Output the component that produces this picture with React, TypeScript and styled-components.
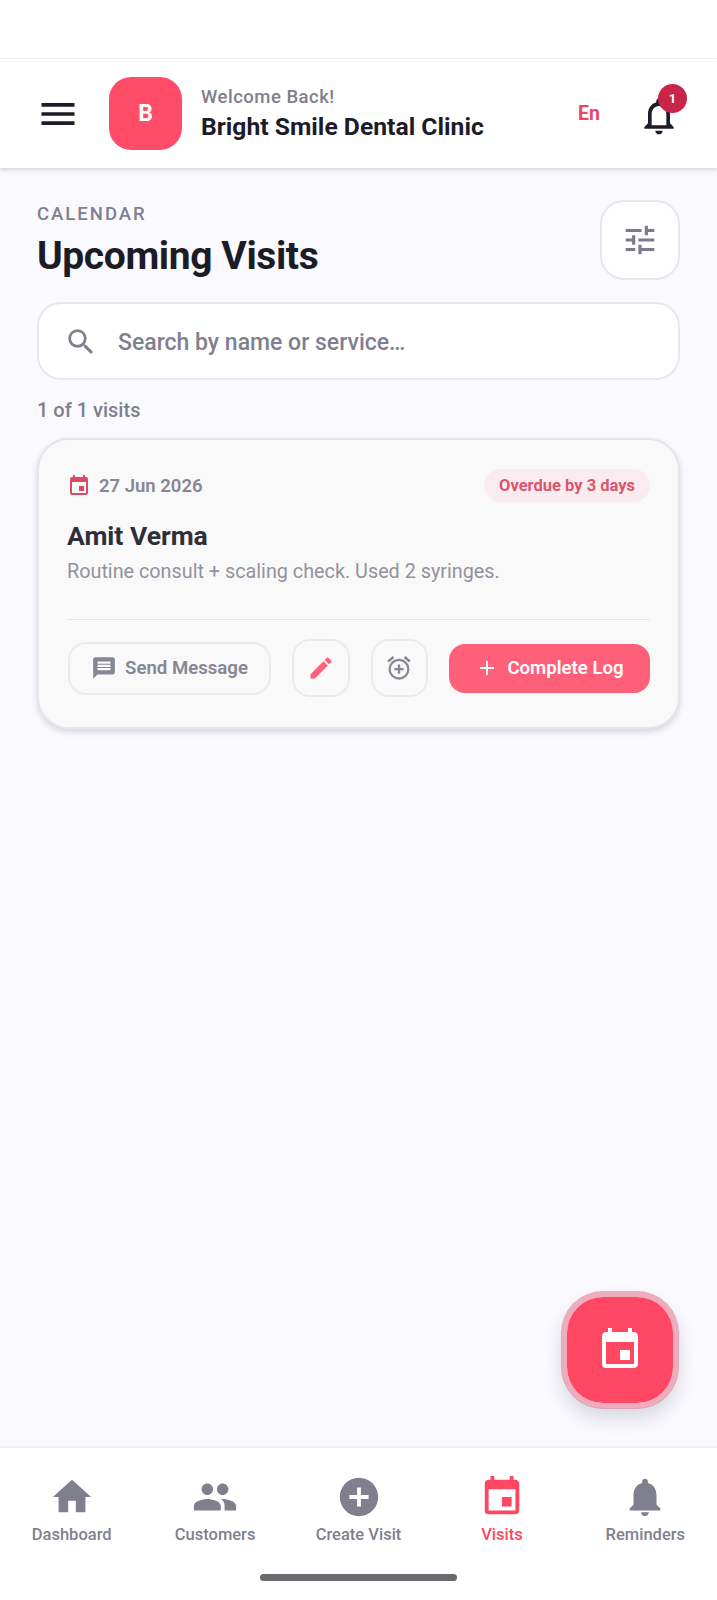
import styled, { createGlobalStyle } from 'styled-components';
import {
  MdAdd,
  MdAddCircle,
  MdEdit,
  MdEvent,
  MdHome,
  MdMenu,
  MdMessage,
  MdNotifications,
  MdOutlineAlarmAdd,
  MdOutlineNotifications,
  MdPeople,
  MdSearch,
  MdTune,
} from 'react-icons/md';

const GlobalStyle = createGlobalStyle`
  html, body {
    margin: 0;
    padding: 0;
    background: #f9f9fe;
    font-family: Roboto, "Liberation Sans", sans-serif;
  }
  * { box-sizing: border-box; }
`;

const Screen = styled.div`
  position: relative;
  width: 717px;
  height: 1600px;
  display: flex;
  flex-direction: column;
  background: #f9f9fe;
  overflow: hidden;
`;

const StatusBar = styled.div`
  height: 58px;
  flex: none;
  background: #ffffff;
`;

const Header = styled.header`
  height: 110px;
  flex: none;
  display: flex;
  align-items: center;
  padding: 0 28px 0 36px;
  background: #ffffff;
  border-top: 1px solid #eeeef0;
  box-shadow: 0 2px 4px rgba(30, 30, 50, 0.16);
`;

const MenuIcon = styled(MdMenu)`
  width: 44px;
  height: 44px;
  color: #1c1c28;
  flex: none;
`;

const Avatar = styled.div`
  width: 73px;
  height: 73px;
  margin-left: 29px;
  flex: none;
  display: flex;
  align-items: center;
  justify-content: center;
  border-radius: 22px;
  background: #ff4d67;
  color: #ffffff;
  font-size: 23px;
  font-weight: 700;
`;

const Greeting = styled.div`
  flex: 1;
  margin-left: 19px;
  display: flex;
  flex-direction: column;
  gap: 5px;
`;

const Welcome = styled.div`
  font-size: 18.5px;
  line-height: 21px;
  font-weight: 500;
  letter-spacing: 0.5px;
  color: #7f7f8e;
`;

const ClinicName = styled.div`
  font-size: 24.7px;
  line-height: 28px;
  font-weight: 700;
  color: #1c1c28;
`;

const Lang = styled.div`
  font-size: 19.5px;
  font-weight: 700;
  color: #e5486a;
`;

const BellWrap = styled.div`
  position: relative;
  width: 44px;
  height: 44px;
  margin-left: 37px;
  margin-right: 8px;
  margin-top: 4px;
  color: #1c1c28;
  svg {
    width: 44px;
    height: 44px;
    display: block;
  }
`;

const BellBadge = styled.div`
  position: absolute;
  top: -10px;
  right: -6px;
  width: 29px;
  height: 29px;
  border-radius: 50%;
  background: #c9244a;
  color: #ffffff;
  font-size: 13px;
  font-weight: 700;
  display: flex;
  align-items: center;
  justify-content: center;
`;

const Main = styled.main`
  flex: 1;
  padding: 34px 37px 0 37px;
  display: flex;
  flex-direction: column;
`;

const TitleRow = styled.div`
  display: flex;
  justify-content: space-between;
  align-items: flex-start;
`;

const Eyebrow = styled.div`
  font-size: 18.5px;
  line-height: 24px;
  font-weight: 500;
  letter-spacing: 2px;
  color: #7f7f8e;
`;

const Title = styled.h1`
  margin: 7px 0 0;
  font-size: 39px;
  line-height: 46px;
  font-weight: 700;
  letter-spacing: -0.4px;
  color: #1c1c28;
`;

const FilterButton = styled.div`
  width: 80px;
  height: 80px;
  margin-top: -2px;
  display: flex;
  align-items: center;
  justify-content: center;
  border-radius: 24px;
  border: 2px solid #e7e7ee;
  background: #ffffff;
  color: #7b7b8b;
  svg {
    width: 38px;
    height: 38px;
  }
`;

const SearchBox = styled.div`
  height: 78px;
  margin-top: 22px;
  padding: 2px 25px 0;
  display: flex;
  align-items: center;
  gap: 20px;
  border-radius: 24px;
  border: 2px solid #e7e7ee;
  background: #ffffff;
  color: #7f7f8e;
  font-size: 23px;
  font-weight: 500;
  svg {
    width: 34px;
    height: 34px;
    flex: none;
  }
`;

const Count = styled.div`
  margin-top: 18px;
  font-size: 20px;
  line-height: 24px;
  font-weight: 500;
  color: #7f7f8e;
`;

const VisitCard = styled.article`
  height: 291px;
  margin-top: 16px;
  padding: 29px 28px 0;
  display: flex;
  flex-direction: column;
  border-radius: 32px;
  border: 2px solid #e6e6ea;
  background: #f9f9f9;
  box-shadow: 0 3px 6px rgba(30, 30, 50, 0.16);
`;

const CardTop = styled.div`
  display: flex;
  align-items: center;
  justify-content: space-between;
`;

const DateLabel = styled.div`
  display: flex;
  align-items: center;
  gap: 8px;
  font-size: 18.5px;
  font-weight: 600;
  color: #868694;
  svg {
    width: 24px;
    height: 24px;
    color: #dc4a68;
  }
`;

const OverdueBadge = styled.div`
  height: 33px;
  padding: 0 15px;
  display: flex;
  align-items: center;
  border-radius: 17px;
  background: #f9ecee;
  color: #dc5470;
  font-size: 16.5px;
  font-weight: 700;
`;

const Patient = styled.div`
  margin-top: 18px;
  font-size: 26.5px;
  line-height: 32px;
  font-weight: 700;
  color: #2f2f3a;
`;

const Notes = styled.div`
  margin-top: 7px;
  font-size: 19.8px;
  line-height: 26px;
  color: #92929f;
`;

const Divider = styled.div`
  height: 1px;
  margin-top: 34px;
  background: #e6e6ea;
`;

const Actions = styled.div`
  margin-top: 19px;
  padding-left: 1px;
  display: flex;
  align-items: center;
`;

const SendButton = styled.div`
  width: 203px;
  height: 53px;
  display: flex;
  align-items: center;
  justify-content: center;
  gap: 8px;
  border-radius: 18px;
  border: 2px solid #ebebee;
  color: #868694;
  font-size: 18.6px;
  font-weight: 600;
  svg {
    width: 26px;
    height: 26px;
  }
`;

const IconButton = styled.div<{ $tint: string }>`
  width: 57.5px;
  height: 58px;
  margin-left: 21px;
  display: flex;
  align-items: center;
  justify-content: center;
  border-radius: 18px;
  border: 2px solid #ebebee;
  color: ${(p) => p.$tint};
  svg {
    width: 28px;
    height: 28px;
  }
`;

const CompleteButton = styled.div`
  width: 201px;
  height: 49px;
  margin-left: 21px;
  display: flex;
  align-items: center;
  justify-content: center;
  gap: 8px;
  border-radius: 16px;
  background: #ff5f78;
  color: #ffffff;
  font-size: 18.6px;
  font-weight: 600;
  svg {
    width: 24px;
    height: 24px;
  }
`;

const Fab = styled.div`
  position: absolute;
  left: 561px;
  top: 1291px;
  width: 118px;
  height: 118px;
  display: flex;
  align-items: center;
  justify-content: center;
  border-radius: 42px;
  border: 6px solid rgba(230, 110, 135, 0.55);
  background: #ff4763;
  background-clip: padding-box;
  color: #ffffff;
  box-shadow: 0 10px 18px rgba(30, 30, 50, 0.14);
  svg {
    width: 48px;
    height: 48px;
  }
`;

const BottomNav = styled.nav`
  height: 154px;
  flex: none;
  position: relative;
  padding-top: 26px;
  display: flex;
  background: #ffffff;
  border-top: 2px solid #efeff2;
`;

const NavItem = styled.div<{ $active?: boolean }>`
  flex: 1;
  display: flex;
  flex-direction: column;
  align-items: center;
  gap: 5px;
  color: ${(p) => (p.$active ? '#ff4763' : '#7f7f8e')};
  font-size: 16.5px;
  line-height: 20px;
  font-weight: 500;
  svg {
    width: 46px;
    height: 46px;
  }
`;

const HomeBar = styled.div`
  position: absolute;
  left: 260px;
  bottom: 19px;
  width: 197px;
  height: 7px;
  border-radius: 4px;
  background: #6a6a6e;
`;

const navItems = [
  { label: 'Dashboard', icon: <MdHome /> },
  { label: 'Customers', icon: <MdPeople /> },
  { label: 'Create Visit', icon: <MdAddCircle /> },
  { label: 'Visits', icon: <MdEvent />, active: true },
  { label: 'Reminders', icon: <MdNotifications /> },
];

export default function App() {
  return (
    <Screen>
      <GlobalStyle />
      <StatusBar />
      <Header>
        <MenuIcon />
        <Avatar>B</Avatar>
        <Greeting>
          <Welcome>Welcome Back!</Welcome>
          <ClinicName>Bright Smile Dental Clinic</ClinicName>
        </Greeting>
        <Lang>En</Lang>
        <BellWrap>
          <MdOutlineNotifications />
          <BellBadge>1</BellBadge>
        </BellWrap>
      </Header>
      <Main>
        <TitleRow>
          <div>
            <Eyebrow>CALENDAR</Eyebrow>
            <Title>Upcoming Visits</Title>
          </div>
          <FilterButton>
            <MdTune />
          </FilterButton>
        </TitleRow>
        <SearchBox>
          <MdSearch />
          Search by name or service…
        </SearchBox>
        <Count>1 of 1 visits</Count>
        <VisitCard>
          <CardTop>
            <DateLabel>
              <MdEvent />
              27 Jun 2026
            </DateLabel>
            <OverdueBadge>Overdue by 3 days</OverdueBadge>
          </CardTop>
          <Patient>Amit Verma</Patient>
          <Notes>Routine consult + scaling check. Used 2 syringes.</Notes>
          <Divider />
          <Actions>
            <SendButton>
              <MdMessage />
              Send Message
            </SendButton>
            <IconButton $tint="#ff5f78">
              <MdEdit />
            </IconButton>
            <IconButton $tint="#868694">
              <MdOutlineAlarmAdd />
            </IconButton>
            <CompleteButton>
              <MdAdd />
              Complete Log
            </CompleteButton>
          </Actions>
        </VisitCard>
      </Main>
      <Fab>
        <MdEvent />
      </Fab>
      <BottomNav>
        {navItems.map((item) => (
          <NavItem key={item.label} $active={item.active}>
            {item.icon}
            {item.label}
          </NavItem>
        ))}
        <HomeBar />
      </BottomNav>
    </Screen>
  );
}
